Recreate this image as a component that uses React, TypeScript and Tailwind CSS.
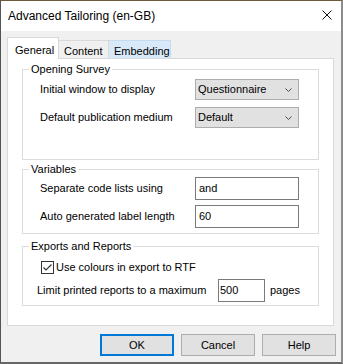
import React from 'react';

const Combo: React.FC<{ value: string }> = ({ value }) => (
  <div className="w-[104px] h-[21px] bg-[#e1e1e1] border border-[#adadad] flex items-center justify-between pl-[2px] pr-[6px]">
    <span>{value}</span>
    <svg width="7" height="4" viewBox="0 0 7 4" className="mt-[1px]">
      <path d="M0.5 0.5 L3.5 3.5 L6.5 0.5" fill="none" stroke="#4d4d4d" strokeWidth="1" />
    </svg>
  </div>
);

const TextBox: React.FC<{ value: string; className: string }> = ({ value, className }) => (
  <div className={`h-[23px] shrink-0 bg-white border border-[#7a7a7a] flex items-center ${className}`}>
    <span>{value}</span>
  </div>
);

const Group: React.FC<{ title: string; className: string; children: React.ReactNode }> = ({ title, className, children }) => (
  <fieldset className={`w-[297px] border border-[#dcdcdc] ${className}`}>
    <legend className="ml-[6px] px-[2px] h-[14px] leading-[14px]">{title}</legend>
    {children}
  </fieldset>
);

export default function App() {
  return (
    <div className="w-[343px] h-[364px] flex flex-col bg-[#f0f0f0] border-l border-t border-r-2 border-b-2 border-l-[#545454] border-t-[#6e5a3a] border-r-[#8c8c8c] border-b-[#676767] font-['Liberation_Sans',Arial,sans-serif] text-[11px] text-black whitespace-nowrap">
      {/* title bar */}
      <div className="h-[30px] bg-white flex items-center justify-between pl-[7px] pr-[9px]">
        <span className="text-[12px]">Advanced Tailoring (en-GB)</span>
        <svg width="10" height="10" viewBox="0 0 10 10" className="mb-[3px]">
          <path d="M0.5 0.5 L9.5 9.5 M9.5 0.5 L0.5 9.5" stroke="#111" strokeWidth="1" />
        </svg>
      </div>

      <div className="flex-1 flex flex-col pl-[6px] pt-[6px]">
        {/* tabs */}
        <div className="flex items-end h-[21px]">
          <div className="relative z-10 w-[52px] h-[22px] -mb-px bg-white border-t border-l border-r border-[#d9d9d9] pl-[7px] pt-[4px]">
            General
          </div>
          <div className="w-[50px] h-[18px] border-t border-r border-[#d9d9d9] pl-[5px] pt-[2px]">
            Content
          </div>
          <div className="w-[62px] h-[18px] bg-[#d8eaf9] border-t border-r border-[#c3dcf2] pl-[5px] pt-[2px]">
            Embedding
          </div>
        </div>

        {/* tab page */}
        <div className="w-[327px] h-[268px] bg-white border border-[#d9d9d9] pl-[14px] pt-[3px]">
          <Group title="Opening Survey" className="pt-[3px] pb-[31px]">
            <div className="flex flex-col gap-[7px] pl-[17px]">
              <div className="flex items-center">
                <span className="w-[155px]">Initial window to display</span>
                <Combo value="Questionnaire" />
              </div>
              <div className="flex items-center">
                <span className="w-[155px]">Default publication medium</span>
                <Combo value="Default" />
              </div>
            </div>
          </Group>

          <Group title="Variables" className="mt-[2px] pt-[1px] pb-[5px]">
            <div className="flex flex-col gap-[5px] pl-[17px]">
              <div className="flex items-center">
                <span className="w-[155px]">Separate code lists using</span>
                <TextBox value="and" className="w-[104px] pl-[3px]" />
              </div>
              <div className="flex items-center">
                <span className="w-[155px]">Auto generated label length</span>
                <TextBox value="60" className="w-[104px] pl-[3px]" />
              </div>
            </div>
          </Group>

          <Group title="Exports and Reports" className="mt-[5px] pt-[8px] pb-[3px]">
            <div className="flex items-center gap-[2px] pl-[18px] h-[13px]">
              <div className="w-[13px] h-[13px] border border-[#333] bg-white flex items-center justify-center">
                <svg width="11" height="11" viewBox="0 0 11 11">
                  <path d="M1.5 5.5 L4 8 L9.5 2.5" fill="none" stroke="#333" strokeWidth="1.2" />
                </svg>
              </div>
              <span>Use colours in export to RTF</span>
            </div>
            <div className="flex items-center mt-[5px] pl-[14px]">
              <span className="w-[181px] shrink-0">Limit printed reports to a maximum</span>
              <TextBox value="500" className="w-[47px] pl-[1px]" />
              <span className="ml-[5px]">pages</span>
            </div>
          </Group>
        </div>

        {/* buttons */}
        <div className="flex gap-[7px] mt-[8px] pl-[93px]">
          <button className="w-[74px] h-[22px] bg-[#e1e1e1] border-2 border-[#0078d7]">OK</button>
          <button className="w-[74px] h-[22px] bg-[#e1e1e1] border border-[#adadad]">Cancel</button>
          <button className="w-[74px] h-[22px] bg-[#e1e1e1] border border-[#adadad]">Help</button>
        </div>
      </div>
    </div>
  );
}
